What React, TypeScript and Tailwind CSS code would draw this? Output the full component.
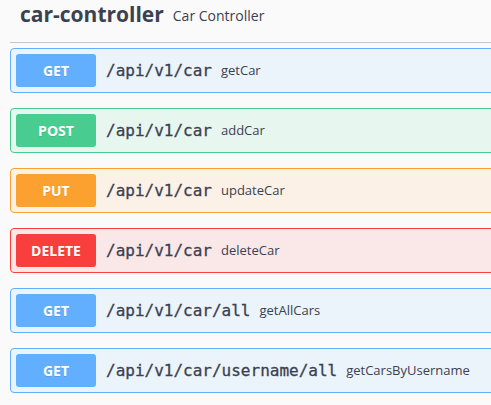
import React from "react";

type Op = {
  method: "GET" | "POST" | "PUT" | "DELETE";
  path: string;
  summary: string;
};

const ops: Op[] = [
  { method: "GET", path: "/api/v1/car", summary: "getCar" },
  { method: "POST", path: "/api/v1/car", summary: "addCar" },
  { method: "PUT", path: "/api/v1/car", summary: "updateCar" },
  { method: "DELETE", path: "/api/v1/car", summary: "deleteCar" },
  { method: "GET", path: "/api/v1/car/all", summary: "getAllCars" },
  { method: "GET", path: "/api/v1/car/username/all", summary: "getCarsByUsername" },
];

const styles: Record<Op["method"], { block: string; badge: string }> = {
  GET: { block: "border-[#61affe] bg-[#ebf3fb]", badge: "bg-[#61affe]" },
  POST: { block: "border-[#49cc90] bg-[#e8f6f0]", badge: "bg-[#49cc90]" },
  PUT: { block: "border-[#fca130] bg-[#fbf1e6]", badge: "bg-[#fca130]" },
  DELETE: { block: "border-[#f93e3e] bg-[#fae7e7]", badge: "bg-[#f93e3e]" },
};

function OpBlock({ op }: { op: Op }) {
  const s = styles[op.method];
  return (
    <div className={`mb-[15px] h-[45px] w-[530px] rounded-[4px] border p-[5px] ${s.block}`}>
      <div className="flex h-full items-center">
        <span
          className={`flex h-[33px] w-[80px] shrink-0 items-center justify-center rounded-[3px] text-[14px] font-bold text-white [text-shadow:0_1px_0_rgba(0,0,0,0.1)] ${s.badge}`}
        >
          {op.method}
        </span>
        <span className="pl-[10px] pr-[9px] font-['DejaVu_Sans_Mono',monospace] text-[16px] text-[#3b4151] [-webkit-text-stroke:0.3px_#3b4151]">
          {op.path}
        </span>
        <span className="text-[13px] text-[#3b4151]">{op.summary}</span>
      </div>
    </div>
  );
}

export default function App() {
  return (
    <div className="h-[405px] w-[491px] overflow-hidden bg-[#fafafa] pl-[10px] font-['Open_Sans',sans-serif] text-[#3b4151]">
      {/* tag header */}
      <div className="flex h-[43px] w-[600px] items-start border-b border-[#c4c6cb] pl-[10px] pt-[4px] leading-none">
        <span className="text-[21px] font-bold">car-controller</span>
        <span className="ml-[9px] mt-[5px] text-[14px]">Car Controller</span>
      </div>

      <div className="mt-[5px]">
        {ops.map((op, i) => (
          <OpBlock key={i} op={op} />
        ))}
      </div>
    </div>
  );
}
